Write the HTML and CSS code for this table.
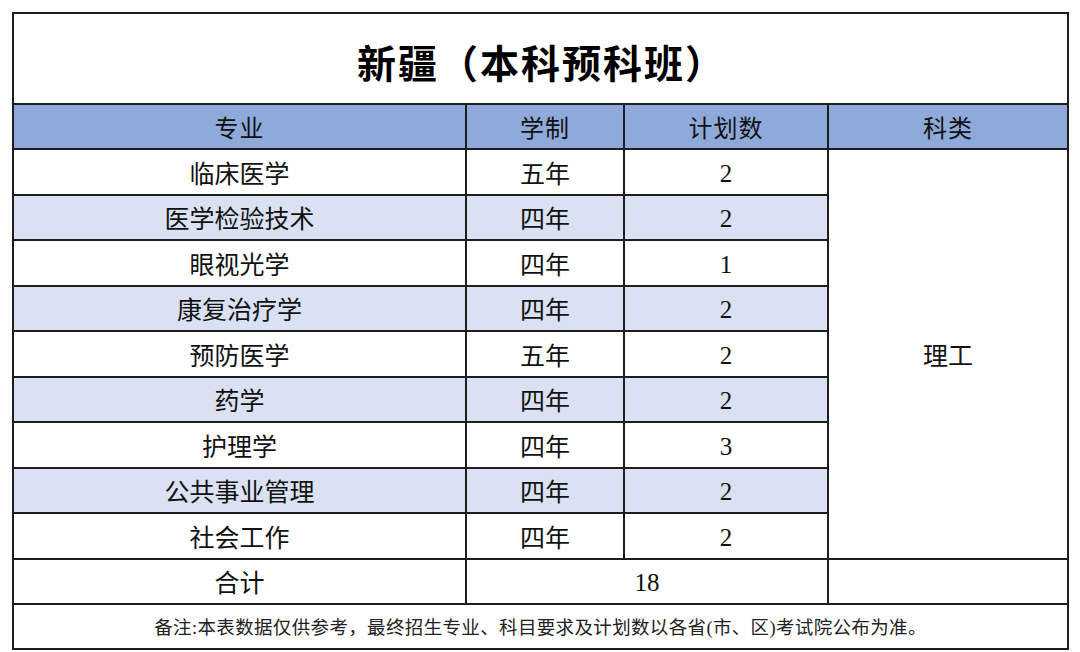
FILE: index.html
```html
<!DOCTYPE html>
<html lang="zh-CN">
<head>
<meta charset="utf-8">
<title>新疆（本科预科班）</title>
<link rel="stylesheet" href="styles.css">
</head>
<body>
<div class="wrap">
<table class="plan">
  <colgroup>
    <col class="c-major">
    <col class="c-years">
    <col class="c-count">
    <col class="c-type">
  </colgroup>
  <tr class="title-row"><td colspan="4" class="title">新疆（本科预科班）</td></tr>
  <tr class="head-row">
    <th>专业</th><th>学制</th><th>计划数</th><th>科类</th>
  </tr>
  <tr class="row"><td>临床医学</td><td>五年</td><td class="num">2</td><td rowspan="9" class="type">理工</td></tr>
  <tr class="row alt"><td>医学检验技术</td><td>四年</td><td class="num">2</td></tr>
  <tr class="row"><td>眼视光学</td><td>四年</td><td class="num">1</td></tr>
  <tr class="row alt"><td>康复治疗学</td><td>四年</td><td class="num">2</td></tr>
  <tr class="row"><td>预防医学</td><td>五年</td><td class="num">2</td></tr>
  <tr class="row alt"><td>药学</td><td>四年</td><td class="num">2</td></tr>
  <tr class="row"><td>护理学</td><td>四年</td><td class="num">3</td></tr>
  <tr class="row alt"><td>公共事业管理</td><td>四年</td><td class="num">2</td></tr>
  <tr class="row"><td>社会工作</td><td>四年</td><td class="num">2</td></tr>
  <tr class="row total"><td>合计</td><td colspan="2" class="num">18</td><td></td></tr>
  <tr class="row note-row"><td colspan="4" class="note">备注:本表数据仅供参考，最终招生专业、科目要求及计划数以各省(市、区)考试院公布为准。</td></tr>
</table>
</div>
</body>
</html>
```

FILE: styles.css
```css
html, body {
  margin: 0;
  padding: 0;
  background: #ffffff;
}

.wrap {
  padding: 12px 0 0 12px;
}

.plan {
  border-collapse: collapse;
  width: 1055px;
  table-layout: fixed;
  font-family: "Liberation Serif", "Noto Sans CJK SC", serif;
  color: #111;
}

.c-major { width: 453px; }
.c-years { width: 158px; }
.c-count { width: 204px; }
.c-type { width: 240px; }

.plan td,
.plan th {
  border: 2px solid #1e1e1e;
  text-align: center;
  vertical-align: middle;
  padding: 0;
  font-size: 25px;
  font-weight: 400;
}

.title-row { height: 91px; }

.plan td.title {
  font-family: "Noto Sans CJK SC", sans-serif;
  font-weight: 700;
  font-size: 39px;
  letter-spacing: 2px;
  color: #000;
  padding: 4px 0 0 2px;
}

.head-row { height: 45px; }

.head-row th {
  background: #8eaadb;
  font-family: "Noto Sans CJK SC", sans-serif;
  font-size: 24px;
  color: #111;
  letter-spacing: 1px;
}

.row { height: 45.5px; }

.row td {
  font-family: "Liberation Serif", "Noto Sans CJK SC", serif;
}

.row.alt td {
  background: #d9e1f2;
}

.row.alt td.type {
  background: #ffffff;
}

.type {
  background: #ffffff;
}

.plan td.num {
  font-size: 25px;
  padding-top: 4px;
}

.total { height: 45px; }

.note-row { height: 45px; }

.plan td.note {
  font-size: 18.5px;
  letter-spacing: 0.35px;
  color: #222;
}
```
